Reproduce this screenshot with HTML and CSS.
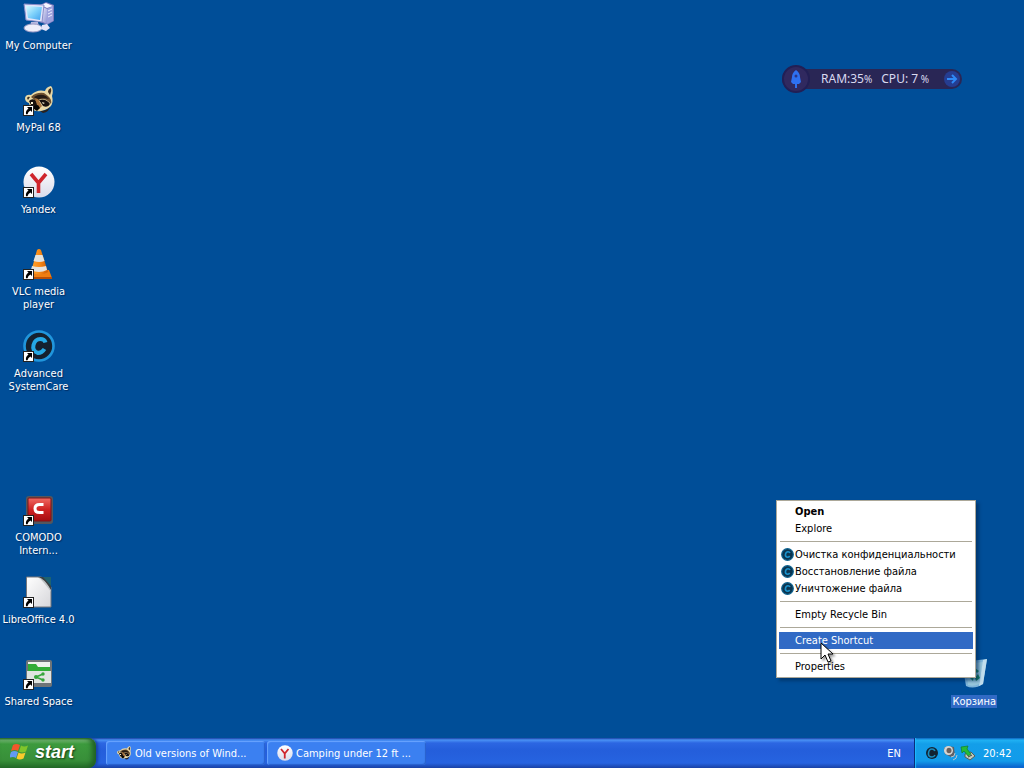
FILE: index.html
```html
<!DOCTYPE html>
<html lang="en">
<head>
<meta charset="utf-8">
<title>Desktop</title>
<link rel="stylesheet" href="styles.css">
</head>
<body>
<svg class="sprites" aria-hidden="true">
  <defs>
    <linearGradient id="g-screen" x1="0" y1="0" x2="1" y2="1"><stop offset="0" stop-color="#d8fbff"/><stop offset=".5" stop-color="#7fd2fb"/><stop offset="1" stop-color="#3fa0ee"/></linearGradient>
    <linearGradient id="g-case" x1="0" y1="0" x2="1" y2="1"><stop offset="0" stop-color="#f4f5ff"/><stop offset="1" stop-color="#8c90d2"/></linearGradient>
    <linearGradient id="g-cone" x1="0" y1="0" x2="1" y2="0"><stop offset="0" stop-color="#ffa42e"/><stop offset=".5" stop-color="#f88a16"/><stop offset="1" stop-color="#c95c08"/></linearGradient>
    <linearGradient id="g-red" x1="0" y1="0" x2="0" y2="1"><stop offset="0" stop-color="#f06a63"/><stop offset=".5" stop-color="#cf2323"/><stop offset="1" stop-color="#a50d10"/></linearGradient>
    <linearGradient id="g-ball" x1="0" y1="0" x2="0" y2="1"><stop offset="0" stop-color="#ffffff"/><stop offset="1" stop-color="#dadbea"/></linearGradient>
    <linearGradient id="g-page" x1="0" y1="0" x2="1" y2="1"><stop offset="0" stop-color="#ffffff"/><stop offset="1" stop-color="#d6d6da"/></linearGradient>
  </defs>
  <symbol id="arrow" viewBox="0 0 11 11"><rect x=".5" y=".5" width="10" height="10" fill="#fff" stroke="#222"/><path d="M4 2h5v5L7.500 5.500Q5 6.500 4.500 9.200H3Q2.300 5.700 5.500 3.500z" fill="#000"/></symbol>
  <symbol id="raccoon" viewBox="0 0 32 32">
    <path d="M2 14q1-4 6-3Q14 5 22 7q1-4 6-5 3 3 1 10 2 7-2 11-6 5-14 4-6-1-7-8-4-1-4-5z" fill="#e9d9a6"/>
    <path d="M4 14q1-2 3-1l-2 3zM25 8q0-3 3-4 1 3-1 7z" fill="#3d2f22"/>
    <path d="M8 13q5-5 13-4l4 3q4 3 3 8-5-6-11-5l-3 3z" fill="#6e5030"/>
    <path d="M11 13q6-4 12-1l3 3q-7-2-12 1z" fill="#241a13"/>
    <path d="M6 17q3-3 6-1l3 4-1 4-5-1zM16 16q7-2 11 4-2 4-7 2z" fill="#17100d"/>
    <path d="m12 14 3 1 4 7-3 3-2-4z" fill="#a9743e"/>
    <path d="M8 18h2v2H8zM19 18l3 1-2 1z" fill="#f9f0cf"/>
    <path d="m11 22 4-1 2 3-3 3-3-2z" fill="#070504"/>
    <path d="M17 27q7 0 10-4-1 5-7 6z" fill="#2b2119"/>
  </symbol>
  <symbol id="yandex" viewBox="0 0 32 32"><circle cx="16" cy="16" r="15.500" fill="url(#g-ball)"/><path d="m8 8 7.500 9L23 8M15.500 16v11" fill="none" stroke="#cf252c" stroke-width="3.600"/></symbol>
  <symbol id="care" viewBox="0 0 32 32"><circle cx="16" cy="16" r="14.500" fill="#15212e" stroke="#2096dc" stroke-width="2.600"/><path d="M22.500 12.500Q21.500 9 17.500 9 12 9 10.500 15t4.500 8q4 0 6.500-4" fill="none" stroke="#25a9e5" stroke-width="4"/></symbol>
  <symbol id="care-small" viewBox="0 0 13 13"><circle cx="6.500" cy="6.500" r="5.800" fill="#0b344f" stroke="#0d628f" stroke-width="1.200"/><path d="M9 5Q8.500 3.700 7 3.700 5 3.700 4.500 6.200T6.300 9.300Q8 9.300 8.700 8" fill="none" stroke="#1a93cd" stroke-width="1.600"/></symbol>
</svg>

<div class="screen">
<main class="desktop">
  <nav class="shortcuts" aria-label="Desktop icons">
    <button class="shortcut"><span class="picture"><svg viewBox="0 0 32 32">
      <path d="m17 3 6-3 8 3v16l-7 4-7-3z" fill="#7879bc"/><path d="m18 3 5-2 7 3-6 2z" fill="#f5f5ff"/><path d="m18 4 6 3v15l-6-3z" fill="url(#g-case)"/><path d="m24 7 6-3v15l-6 3z" fill="#9ca1dd"/><path d="m25 9 4-2m-4 5 4-2m-4 5 4-2" stroke="#eef" />
      <path d="m1 2 20 1q-1 8-2 17L3 18Q2 9 1 2z" fill="#e2e5fa" stroke="#8a8dc9"/><path d="m3 4 16 1q-1 7-2 13L5 16Q4 9 3 4z" fill="url(#g-screen)"/>
      <path d="m8 20 7 0 1 5H7z" fill="#b7b9e0"/><ellipse cx="10" cy="26" rx="9" ry="4" fill="#eeeefa" stroke="#9999c5"/><path d="m19 23 5-1 3 4-4 3-5-2z" fill="#e4e4f8"/></svg></span><span class="label">My Computer</span></button>
    <button class="shortcut"><span class="picture"><svg><use href="#raccoon"/></svg><svg class="mark"><use href="#arrow"/></svg></span><span class="label">MyPal 68</span></button>
    <button class="shortcut"><span class="picture"><svg><use href="#yandex"/></svg><svg class="mark"><use href="#arrow"/></svg></span><span class="label">Yandex</span></button>
    <button class="shortcut"><span class="picture"><svg viewBox="0 0 32 32">
      <path d="m7 23 19-1 3 8H4z" fill="#ee7e12"/><path d="M4 29h25v2H4z" fill="#b94f06"/><path d="M14 2q2-2 4 0l7 22q-8 5-17 0z" fill="url(#g-cone)"/><path d="m12.500 7 7 0 2 6q-5 2-11 0zM9 18q7 2 14 0l1 4q-8 4-16 0z" fill="#e4e4e0"/></svg><svg class="mark"><use href="#arrow"/></svg></span><span class="label">VLC media player</span></button>
    <button class="shortcut"><span class="picture"><svg><use href="#care"/></svg><svg class="mark"><use href="#arrow"/></svg></span><span class="label">Advanced SystemCare</span></button>
    <button class="shortcut after-gap"><span class="picture"><svg viewBox="0 0 32 32">
      <rect x="3" y="2" width="27" height="28" rx="3" fill="#55565c"/><rect x="5" y="4" width="23" height="23" rx="1" fill="url(#g-red)" stroke="#7d1315"/><path d="M20.500 10.500h-4q-4.500 0-4.500 4t4.500 4h4" fill="none" stroke="#fff" stroke-width="3"/></svg><svg class="mark"><use href="#arrow"/></svg></span><span class="label">COMODO Intern...</span></button>
    <button class="shortcut"><span class="picture"><svg viewBox="0 0 32 32">
      <path d="M3.500 1h15L28 11v20H3.500z" fill="url(#g-page)" stroke="#77777b"/><path d="M15 1h13v14Q23 5 15 1z" fill="#3c4042"/><path d="M20 1h8v9z" fill="#1d6271"/><path d="M15 1q6 1 13 13v2Q21 6 15 1z" fill="#bfc3c4"/></svg><svg class="mark"><use href="#arrow"/></svg></span><span class="label">LibreOffice 4.0</span></button>
    <button class="shortcut"><span class="picture"><svg viewBox="0 0 32 32">
      <rect x="3" y="2" width="26" height="27" rx="2" fill="#6f7478"/><path d="M5 4h22v8H5z" fill="#eef3ed"/><path d="M5 6h8l2 3h12v5H5z" fill="#32ad37"/><path d="M4 13h24v12H4z" fill="#e0e4e1"/><path d="m20 16-7 3 7 3" fill="none" stroke="#36a63b" stroke-width="1.600"/><circle cx="20" cy="16" r="1.700" fill="#36a63b"/><circle cx="13" cy="19" r="2" fill="#36a63b"/><circle cx="20" cy="22" r="1.700" fill="#36a63b"/></svg><svg class="mark"><use href="#arrow"/></svg></span><span class="label">Shared Space</span></button>
  </nav>

  <section class="monitor" aria-label="Performance monitor">
    <span class="rocket"><svg viewBox="0 0 28 28"><circle cx="14" cy="14" r="13" fill="#30295f" stroke="#221f55" stroke-width="2"/><path d="M14 5q4 3 4 7l1 5-2 2h-2v4h-2v-4h-2l-2-2 1-5q0-4 4-7z" fill="#2e70f1"/><circle cx="14" cy="11" r="1.500" fill="#2b3486"/></svg></span>
    <span class="stat">RAM:35<small>%</small></span><span class="stat">CPU: 7<small> %</small></span>
    <button class="expand" aria-label="Expand"><svg viewBox="0 0 18 18"><circle cx="9" cy="9" r="8" fill="#253d91"/><path d="M4 9h9M9 5l4 4-4 4" fill="none" stroke="#2f8af7" stroke-width="2"/></svg></button>
  </section>

  <button class="shortcut bin"><span class="picture"><svg viewBox="0 0 32 32"><path d="m4 4 25-3-4 25q-9 6-17 2z" fill="#7eb4d9"/><path d="m8 6 17-2-4 22q-6 3-11 1z" fill="#a8d2dd" opacity=".6"/><path d="m25 2 4-1-4 25-4 2z" fill="#c0dded"/><path d="m13 13 4-3 4 3-2 2-2-2-2 3zm7 3 2 4-4 3-1-3zm-5 7-3-3 2-4 2 2z" fill="#16865a"/></svg></span><span class="label">Корзина</span></button>

  <div class="menu" role="menu">
    <button class="item default" role="menuitem">Open</button>
    <button class="item" role="menuitem">Explore</button>
    <hr>
    <button class="item" role="menuitem"><svg><use href="#care-small"/></svg>Очистка конфиденциальности</button>
    <button class="item" role="menuitem"><svg><use href="#care-small"/></svg>Восстановление файла</button>
    <button class="item" role="menuitem"><svg><use href="#care-small"/></svg>Уничтожение файла</button>
    <hr>
    <button class="item" role="menuitem">Empty Recycle Bin</button>
    <hr>
    <button class="item active" role="menuitem">Create Shortcut</button>
    <hr>
    <button class="item" role="menuitem">Properties</button>
  </div>
  <svg class="pointer" viewBox="0 0 14 22"><path d="M1 1v16l4-4 3 7 3-1-3-7h5z" fill="#fff" stroke="#000"/></svg>
</main>

<footer class="taskbar">
  <button class="start"><svg viewBox="0 0 20 20"><path d="M3 3q3-2 7 0L8 9Q5 7 1 9z" fill="#f2572b"/><path d="M11 3.500q3 2 7 0l-2 6q-4 2-7 0z" fill="#80c52b"/><path d="M1 10q3-2 7 0l-2 6q-3-2-7 0z" fill="#629af2"/><path d="M8.500 10.500q3 2 7 0l-2 6q-4 2-7 0z" fill="#fbca2c"/></svg>start</button>
  <div class="tasks">
    <button class="task"><svg><use href="#raccoon"/></svg>Old versions of Wind...</button>
    <button class="task"><svg><use href="#yandex"/></svg>Camping under 12 ft ...</button>
  </div>
  <button class="language">EN</button>
  <div class="tray">
    <svg viewBox="0 0 16 16"><circle cx="8" cy="8" r="6" fill="#122332"/><path d="M11 6q-1-2-3-2-3 0-3.500 4T8 12q2 0 3-2" fill="none" stroke="#1a8dc0" stroke-width="1.600"/></svg>
    <svg viewBox="0 0 16 16"><path d="m2 3 4-2 6 1 1 9-4 1-6-3z" fill="#5d6066"/><ellipse cx="6.500" cy="5.500" rx="4.500" ry="4.500" fill="#d6d5d2"/><ellipse cx="7" cy="5.500" rx="2.500" ry="2.800" fill="#69605c"/><path d="M9 12q4 0 4-4m-2 7q4-1 4-5" fill="none" stroke="#b7c5cf"/></svg>
    <svg viewBox="0 0 16 16"><path d="m5 9 6-2 4 4-5 4-5-3z" fill="#c3c8bc" stroke="#52605d"/><path d="m1 2 7-1-1 3 4 5-3 2-4-5-2 2z" fill="#24bb38" stroke="#137c2a" stroke-width=".7"/><path d="m8 12 4-2" stroke="#39453f"/></svg>
    <time>20:42</time>
  </div>
</footer>
</div>
</body>
</html>
```
FILE: styles.css
```css
* { box-sizing: border-box; }
body {
  margin: 0;
  font: 11px/13px "DejaVu Sans Condensed", "DejaVu Sans", sans-serif;
  color: #fff;
}
button {
  margin: 0;
  padding: 0;
  border: 0;
  background: none;
  color: inherit;
  font: inherit;
}
svg { display: block; flex: none; }
.sprites { position: absolute; width: 0; height: 0; }

.screen { display: flex; flex-direction: column; min-height: 100vh; background: #004e98; }
.desktop { position: relative; flex: 1; }

.shortcuts { display: flex; flex-direction: column; width: 77px; padding-top: 2px; }
.shortcut { display: flex; flex-direction: column; align-items: center; gap: 5px; height: 82px; }
.shortcut:last-child { height: 80px; }
.shortcut.after-gap { margin-top: 82px; }
.picture { position: relative; }
.picture svg { width: 32px; height: 32px; }
.picture .mark { position: absolute; left: 0; bottom: 0; width: 11px; height: 11px; }
.label { text-shadow: 1px 1px 1px #002b60; }
.shortcuts .label { max-width: 76px; }
.shortcut.bin { position: absolute; right: 27px; bottom: 0; height: 80px; }
.bin .label { padding: 0 1px; background: #316ac5; text-shadow: none; }

.monitor {
  position: absolute;
  top: 69px;
  right: 62px;
  display: flex;
  align-items: center;
  gap: 9px;
  width: 180px;
  height: 20px;
  border-radius: 10px;
  background: #292655;
  color: #d9daf0;
  font: 12px/20px "Noto Sans", sans-serif;
}
.rocket { margin-right: 2px; }
.rocket svg { width: 28px; height: 28px; }
.stat { white-space: pre; }
.stat small { font-size: 10px; }
.expand { margin-left: auto; padding-right: 1px; }
.expand svg { width: 18px; height: 18px; }

.menu {
  position: absolute;
  right: 48px;
  bottom: 60px;
  width: 200px;
  padding: 2px;
  border: 1px solid #aca899;
  background: #fff;
  box-shadow: 3px 3px 3px #002c5999;
  color: #000;
}
.item { display: flex; align-items: center; width: 100%; height: 17px; padding-left: 16px; white-space: nowrap; }
.item svg { width: 13px; height: 13px; margin: 0 1px 0 -14px; }
.default { font-weight: bold; }
.active { background: #316ac5; color: #fff; }
.menu hr { height: 1px; margin: 4px 1px; border: 0; background: #aca899; }
.pointer { position: absolute; right: 190px; bottom: 74px; width: 14px; height: 22px; filter: drop-shadow(2px 2px 1px #0006); }

.taskbar {
  display: flex;
  flex: none;
  align-items: stretch;
  height: 30px;
  background: linear-gradient(#1941a5 0, #4a92f5 2px, #2c66e2 5px, #245edb 12px, #2663e0 25px, #1941a5 30px);
}
.start {
  display: flex;
  align-items: center;
  gap: 5px;
  width: 96px;
  padding: 0 0 2px 10px;
  border-radius: 0 8px 8px 0;
  background: linear-gradient(#276d26 0, #72b872 2px, #3c9a3d 6px, #388f39 22px, #246f28 30px);
  box-shadow: inset -4px 0 5px #216125, 2px 0 3px #1742a5;
  font: italic bold 18px/20px "Liberation Sans", sans-serif;
  text-shadow: 1px 1px 2px #123b16;
}
.start svg { width: 20px; height: 20px; }
.tasks { display: flex; flex: 1; gap: 2px; padding: 3px 0 3px 10px; }
.task {
  display: flex;
  align-items: center;
  gap: 3px;
  width: 159px;
  padding: 0 10px;
  border-radius: 3px;
  background: #3b80f1;
  box-shadow: inset 1px 1px 1px #6ba5ff, inset -1px -1px 1px #2860cc;
  white-space: nowrap;
}
.task svg { width: 16px; height: 16px; }
.language { width: 40px; }
.tray {
  display: flex;
  align-items: center;
  gap: 2px;
  width: 110px;
  padding-left: 9px;
  border-left: 1px solid #092e7b;
  background: linear-gradient(#0c59b9 0, #20b1f3 2px, #139ee9 6px, #129bea 23px, #095bc9 30px);
  box-shadow: inset 1px 0 1px #20bbff;
}
.tray svg { width: 16px; height: 16px; }
.tray time { margin-left: 5px; }
```
